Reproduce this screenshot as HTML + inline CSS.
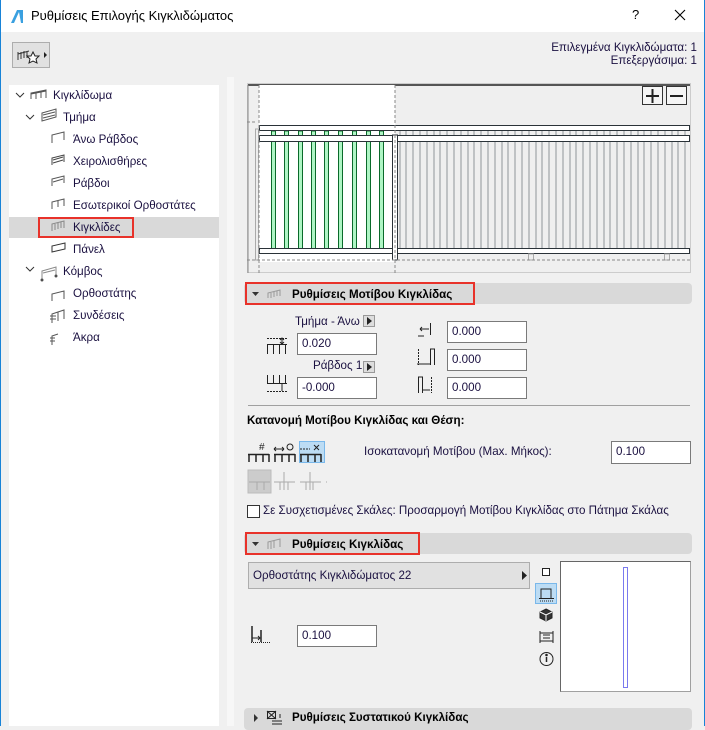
<!DOCTYPE html>
<html><head><meta charset="utf-8"><style>
*{box-sizing:border-box;margin:0;padding:0}
body{width:705px;height:726px;overflow:hidden;background:#f0f0f0;font-family:"Liberation Sans","DejaVu Sans",sans-serif;font-size:11.6px;color:#1a1040;position:relative}
.a{position:absolute}
.t{position:absolute;white-space:nowrap;line-height:14px}
.inp{position:absolute;background:#fff;border:1px solid #7a7a7a;padding-left:4px;line-height:20px;color:#1a1040}
.hdr{position:absolute;background:#d9d9d9;border-radius:4px;height:21px}
.b{font-weight:bold;color:#000}
.red{position:absolute;border:2px solid #e8322a}
</style></head><body>
<div class="a" style="left:0;top:0;width:705px;height:32px;background:#fff"></div>
<div class="a" style="left:0;top:0;width:1px;height:726px;background:#1883d7"></div>
<div class="a" style="right:0;top:0;width:1px;height:726px;background:#1883d7"></div>
<svg class="a" style="left:9px;top:8px" width="16" height="16"><path d="M2 15 L8 2 L14 2 L14 15 Z" fill="#3aa0e0"/><path d="M5 15 L10 4 L12 15Z" fill="#fff"/></svg>
<div class="t" style="left:31px;top:9px;font-size:13px;color:#000">Ρυθμίσεις Επιλογής Κιγκλιδώματος</div>
<div class="t" style="left:632px;top:8px;font-size:13px;color:#000">?</div>
<svg class="a" style="left:674px;top:9px" width="12" height="12"><path d="M1 1L11 11M11 1L1 11" stroke="#000" stroke-width="1.1"/></svg>

<div class="a" style="left:12px;top:42px;width:38px;height:26px;border:1px solid #adadad;background:#e1e1e1"></div>
<svg class="a" style="left:15px;top:44px" width="34" height="22"><path d="M3 10 L14 7 M3 8v8 M6 8v7 M9 7v7 M12 7v7" stroke="#333" fill="none"/><path d="M18 8 l2 4 4 0 -3 3 1 4 -4 -2 -4 2 1 -4 -3 -3 4 0z" fill="#fff" stroke="#222"/><path d="M29 8 l3 3 -3 3z" fill="#222"/></svg>
<div class="t" style="right:8px;top:41px;text-align:right">Επιλεγμένα Κιγκλιδώματα: 1</div>
<div class="t" style="right:8px;top:54px;text-align:right">Επεξεργάσιμα: 1</div>

<div class="a" style="left:9px;top:85px;width:210px;height:641px;background:#fff"></div>
<div class="a" style="left:227px;top:77px;width:7px;height:649px;background:#f7f7f7"></div>
<div class="a" style="left:9px;top:217px;width:210px;height:21px;background:#d9d9d9"></div>
<div class="red" style="left:38px;top:217px;width:96px;height:21px"></div>
<svg class="a" style="left:0;top:85px" width="219" height="270" fill="none" stroke="#555">
<path d="M16 8l4 4 4-4M26 30l4 4 4-4M26 182l4 4 4-4" stroke="#333"/>
<path d="M31 14 L31 8 L46 5 L46 13 M31 9 L46 6 M36 8v6 M41 7v6"/>
<path d="M42 36 L42 28 L56 24 L56 32Z M43 30 L55 27 M43 33 L55 30"/>
<path d="M52 58 L52 50 L64 47 L64 55"/>
<path d="M52 80 L52 73 L64 70 L64 77 M53 75 L63 72 M53 78 L63 75" stroke="#444"/>
<path d="M52 101 L52 94 L64 91 L64 98 M53 97 L63 94" />
<path d="M52 124 L52 117 L64 114 L64 121 M58 116v6"/>
<path d="M52 146 L52 139 L64 136 L64 143 M55 139v6 M58 138v6 M61 137v6" stroke="#888"/>
<path d="M52 167 L52 161 L65 158 L65 164Z" stroke="#333"/>
<path d="M42 194 L42 186 L56 182 L56 190 M43 188 L55 185" stroke="#888"/><circle cx="42" cy="195" r="1" fill="#333"/><circle cx="56" cy="191" r="1" fill="#333"/>
<path d="M52 216 L52 209 L64 206 L64 214"/>
<path d="M52 238 L52 229 L58 227 L58 236 M58 227 L64 225 L64 234 M50 231h6 M50 234h6"/>
<path d="M52 260 L52 251 L58 249 M50 253h5 M50 256h5"/>
</svg>
<div class="t" style="left:53px;top:89px">Κιγκλίδωμα</div>
<div class="t" style="left:63px;top:111px">Τμήμα</div>
<div class="t" style="left:73px;top:133px">Άνω Ράβδος</div>
<div class="t" style="left:73px;top:155px">Χειρολισθήρες</div>
<div class="t" style="left:73px;top:177px">Ράβδοι</div>
<div class="t" style="left:73px;top:199px">Εσωτερικοί Ορθοστάτες</div>
<div class="t" style="left:73px;top:221px">Κιγκλίδες</div>
<div class="t" style="left:73px;top:243px">Πάνελ</div>
<div class="t" style="left:63px;top:265px">Κόμβος</div>
<div class="t" style="left:73px;top:287px">Ορθοστάτης</div>
<div class="t" style="left:73px;top:309px">Συνδέσεις</div>
<div class="t" style="left:73px;top:331px">Άκρα</div>

<svg class="a" style="left:247px;top:83px" width="444" height="190">
<rect x="0.5" y="0.5" width="443" height="189" fill="#efefef" stroke="#ccc"/>
<path d="M1 2H443" stroke="#222" stroke-width="1.5"/>
<path d="M1 2V190" stroke="#888"/>
<rect x="12" y="2" width="136" height="177" fill="#fff"/>
<g stroke="#8f959a" stroke-width="1">
<path d="M153 48V166 M159 48V166 M166 48V166 M173 48V166 M180 48V166 M187 48V166 M193 48V166 M200 48V166 M207 48V166 M214 48V166 M221 48V166 M227 48V166 M234 48V166 M241 48V166 M248 48V166 M255 48V166 M261 48V166 M268 48V166 M275 48V166 M282 48V166 M289 48V166 M295 48V166 M302 48V166 M309 48V166 M316 48V166 M323 48V166 M329 48V166 M336 48V166 M343 48V166 M350 48V166 M357 48V166 M363 48V166 M370 48V166 M377 48V166 M384 48V166 M391 48V166 M397 48V166 M404 48V166 M411 48V166 M418 48V166 M425 48V166 M431 48V166 M438 48V166"/>
</g>
<g fill="#aef5c4" stroke="#0a6a2a">
<rect x="24.5" y="48" width="4" height="118"/><rect x="37.5" y="48" width="4" height="118"/><rect x="51.5" y="48" width="4" height="118"/><rect x="64.5" y="48" width="4" height="118"/><rect x="77.5" y="48" width="4" height="118"/><rect x="91.5" y="48" width="4" height="118"/><rect x="105.5" y="48" width="4" height="118"/><rect x="119.5" y="48" width="4" height="118"/><rect x="132.5" y="48" width="4" height="118"/>
</g>
<g fill="#fff" stroke="#2a3238">
<rect x="12.5" y="42.5" width="430" height="5"/><rect x="12.5" y="52.5" width="430" height="6"/><rect x="12.5" y="165.5" width="430" height="5"/>
<rect x="145.5" y="52" width="5" height="125"/>
</g>
<g fill="#eee" stroke="#aaa"><rect x="281.5" y="171" width="5" height="6"/><rect x="417.5" y="171" width="5" height="6"/><rect x="8.5" y="46" width="3" height="131"/></g>
<g stroke="#888" stroke-dasharray="3,2" fill="none"><path d="M12 2V190 M148 2V190 M0 177H443 M0 39H10"/></g>
<rect x="395.5" y="3.5" width="20" height="18" fill="#f5f5f5" stroke="#333"/><path d="M399 13h13 M405.5 6v14" stroke="#222" stroke-width="2"/>
<rect x="419.5" y="3.5" width="20" height="18" fill="#f5f5f5" stroke="#333"/><path d="M423 13h13" stroke="#222" stroke-width="2"/>
</svg>

<div class="hdr" style="left:244px;top:283px;width:448px"></div>
<div class="red" style="left:245px;top:282px;width:230px;height:23px"></div>
<svg class="a" style="left:250px;top:287px" width="40" height="14"><path d="M2 5h7l-3.5 4z" fill="#333"/><path d="M18 11V6L30 3V9 M21 6v5 M24 5v5 M27 4v5" stroke="#999" fill="none"/></svg>
<div class="t b" style="left:292px;top:288px">Ρυθμίσεις Μοτίβου Κιγκλίδας</div>
<div class="t" style="left:295px;top:315px">Τμήμα - Άνω</div>
<div class="a" style="left:363px;top:315px;width:12px;height:12px;background:#ddd;border:1px solid #999"></div>
<svg class="a" style="left:366px;top:317px" width="8" height="8"><path d="M1 0l5 4-5 4z" fill="#222"/></svg>
<div class="inp" style="left:297px;top:333px;width:80px;height:22px">0.020</div>
<div class="t" style="left:313px;top:359px">Ράβδος 1</div>
<div class="a" style="left:363px;top:361px;width:12px;height:12px;background:#ddd;border:1px solid #999"></div>
<svg class="a" style="left:366px;top:363px" width="8" height="8"><path d="M1 0l5 4-5 4z" fill="#222"/></svg>
<div class="inp" style="left:297px;top:377px;width:80px;height:22px">-0.000</div>
<svg class="a" style="left:266px;top:333px" width="24" height="70" fill="none" stroke="#222">
<path d="M1 5.5h20" stroke-dasharray="2,1"/><path d="M1 11.5h20 M1.5 11v10 M7.5 11v10 M13.5 11v10 M19.5 11v10"/><path d="M16 5v6 M14 7l2-2 2 2 M14 9l2 2 2-2"/>
<path d="M1.5 42v8 M7.5 42v8 M13.5 42v8 M19.5 42v8 M1 50.5h20"/><path d="M1 58.5h20" stroke-dasharray="2,1"/><path d="M16 51v7"/>
</svg>
<svg class="a" style="left:416px;top:320px" width="28" height="82" fill="none" stroke="#222">
<path d="M14.5 3v12 M4 9h9 M2 16h6" /><path d="M4 9l2-2M4 9l2 2"/>
<path d="M14.5 29v16 M18.5 29v16 M14 29h5 M1 44h13" /><path d="M2.5 29v16" stroke-dasharray="2,1"/>
<path d="M2.5 57v16 M6.5 57v16 M2 57h5 M7 70h7" /><path d="M15.5 57v16" stroke-dasharray="2,1"/>
</svg>
<div class="inp" style="left:447px;top:321px;width:80px;height:22px">0.000</div>
<div class="inp" style="left:447px;top:349px;width:80px;height:22px">0.000</div>
<div class="inp" style="left:447px;top:377px;width:80px;height:22px">0.000</div>
<div class="a" style="left:248px;top:405px;width:442px;height:1px;background:#a0a0a0"></div>
<div class="t b" style="left:247px;top:414px">Κατανομή Μοτίβου Κιγκλίδας και Θέση:</div>
<div class="a" style="left:299px;top:441px;width:26px;height:22px;background:#bcdcf4;border:1px solid #7ab8ea"></div>
<svg class="a" style="left:247px;top:440px" width="80" height="56" fill="none" stroke="#222">
<path d="M1 14.5h21 M2 14v8 M9 14v8 M16 14v8 M22 14v8" stroke-width="1.5"/><text x="12" y="10" font-size="10" fill="#222" stroke="none" font-family="Liberation Sans">#</text>
<path d="M27 14.5h21 M28 14v8 M35 14v8 M42 14v8 M48 14v8" stroke-width="1.5"/><path d="M27 9h10 M27 9l2-2M27 9l2 2M37 9l-2-2M37 9l-2 2"/><circle cx="43" cy="7" r="3"/>
<path d="M53 14.5h21 M54 14v8 M61 14v8 M68 14v8 M74 14v8" stroke-width="1.5"/><path d="M53 9h10" stroke-dasharray="2,1"/><path d="M67 5l5 5M72 5l-5 5"/>
<rect x="1" y="30" width="23" height="23" fill="#ccc" stroke="#bbb"/>
<g stroke="#aaa"><path d="M2 42h21 M27 42h21 M53 42h21 M79 42h21 M10 42v8 M17 42v8 M33 42v8 M41 42v8 M59 42v8 M66 42v8 M37 32v18 M63 32v18"/></g>
</svg>
<div class="t" style="left:364px;top:445px">Ισοκατανομή Μοτίβου (Max. Μήκος):</div>
<div class="inp" style="left:611px;top:441px;width:80px;height:23px">0.100</div>
<div class="a" style="left:247px;top:505px;width:13px;height:13px;background:#fff;border:1px solid #333"></div>
<div class="t" style="left:263px;top:504px">Σε Συσχετισμένες Σκάλες: Προσαρμογή Μοτίβου Κιγκλίδας στο Πάτημα Σκάλας</div>

<div class="hdr" style="left:244px;top:533px;width:448px"></div>
<div class="red" style="left:245px;top:532px;width:175px;height:23px"></div>
<svg class="a" style="left:250px;top:537px" width="40" height="14"><path d="M2 5h7l-3.5 4z" fill="#333"/><path d="M18 12V5L30 2V10 M21 5v7 M24 4v7" stroke="#999" fill="none"/></svg>
<div class="t b" style="left:292px;top:538px">Ρυθμίσεις Κιγκλίδας</div>
<div class="a" style="left:248px;top:562px;width:282px;height:27px;background:#e1e1e1;border:1px solid #adadad"></div>
<div class="t" style="left:253px;top:569px">Ορθοστάτης Κιγκλιδώματος 22</div>
<svg class="a" style="left:522px;top:571px" width="6" height="9"><path d="M0 0l5 4.5-5 4.5z" fill="#222"/></svg>
<div class="a" style="left:535px;top:583px;width:22px;height:21px;background:#bcdcf4;border:1px solid #7ab8ea"></div>
<svg class="a" style="left:536px;top:565px" width="22" height="108" fill="none" stroke="#222">
<rect x="6.5" y="3.5" width="7" height="7" fill="#fff"/>
<path d="M5 33V24h10v9 M3 33.5h15"/><path d="M4 36h14" stroke-dasharray="1,1"/>
<path d="M10 44l6 3v6l-6 3-6-3v-6z" fill="#333"/><path d="M4 47l6 3 6-3 M10 50v6" stroke="#fff"/>
<path d="M4 66v12 M17 66v12 M4 68h13 M4 76h13 M7 70h7 M7 73h7"/>
<circle cx="10.5" cy="94" r="6.5"/><path d="M10.5 92v5" stroke-width="1.5"/><circle cx="10.5" cy="90" r=".8" fill="#222"/>
</svg>
<div class="a" style="left:560px;top:561px;width:131px;height:131px;background:#fff;border:1px solid #a0a0a0;border-left-color:#666;border-top-color:#666"></div>
<div class="a" style="left:623px;top:567px;width:5px;height:121px;border:1px solid #7a7aee"></div>
<svg class="a" style="left:248px;top:624px" width="24" height="22" fill="none" stroke="#222"><path d="M4 2v16 M13 6v12" stroke-width="1.5"/><path d="M3 18.5h20" stroke-dasharray="1,1"/><path d="M4 14h8 M10 12l2 2-2 2"/></svg>
<div class="inp" style="left:297px;top:625px;width:80px;height:22px">0.100</div>

<div class="hdr" style="left:244px;top:708px;width:448px;height:22px"></div>
<svg class="a" style="left:250px;top:708px" width="40" height="18"><path d="M4 6l4 4-4 4z" fill="#333"/><path d="M17.5 3.5h8v7h-8z M17 3l9 8 M26 3l-9 8 M22 13h10 M22 16h10 M30 6v4" stroke="#222" fill="none"/></svg>
<div class="t b" style="left:292px;top:711px">Ρυθμίσεις Συστατικού Κιγκλίδας</div>
</body></html>
